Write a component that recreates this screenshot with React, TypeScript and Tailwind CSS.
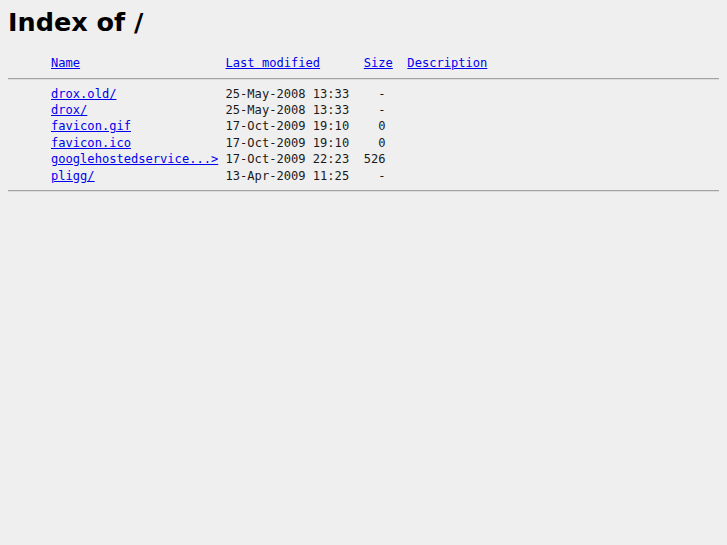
import React from "react";

const rows: [string, string, string][] = [
  ["drox.old/", "25-May-2008 13:33", "-"],
  ["drox/", "25-May-2008 13:33", "-"],
  ["favicon.gif", "17-Oct-2009 19:10", "0"],
  ["favicon.ico", "17-Oct-2009 19:10", "0"],
  ["googlehostedservice...>", "17-Oct-2009 22:23", "526"],
  ["pligg/", "13-Apr-2009 11:25", "-"],
];

const link = "text-[#0000ee] underline";

export default function App() {
  return (
    <div
      className="min-h-[545px] w-full bg-[#efefef] p-[8px] text-black"
      style={{ fontFamily: '"DejaVu Sans", sans-serif' }}
    >
      <h1 className="m-0 text-[25.5px] font-bold leading-[28px] [font-family:'DejaVu_Sans',sans-serif]">
        Index of /
      </h1>
      <div className="mt-[18.5px] whitespace-pre pl-[43px] text-[12.08px] leading-[16px] text-[#1a1a1a] [font-family:'DejaVu_Sans_Mono',monospace]">
        <a className={link}>Name</a>
        {"                    "}
        <a className={link}>Last modified</a>
        {"      "}
        <a className={link}>Size</a>
        {"  "}
        <a className={link}>Description</a>
      </div>
      <div className="mt-[7.5px] h-[2px] border-t border-b border-t-[#a3a3a3] border-b-[#dcdcdc]" />
      <div className="mt-[5.6px] whitespace-pre pl-[43px] text-[12.08px] leading-[16.4px] text-[#1a1a1a] [font-family:'DejaVu_Sans_Mono',monospace]">
        {rows.map(([name, date, size]) => (
          <div key={name}>
            <a className={link}>{name}</a>
            {" ".repeat(24 - name.length)}
            {date}
            {size.padStart(5, " ")}
          </div>
        ))}
      </div>
      <div className="mt-[6px] h-[2px] border-t border-b border-t-[#a3a3a3] border-b-[#dcdcdc]" />
    </div>
  );
}
